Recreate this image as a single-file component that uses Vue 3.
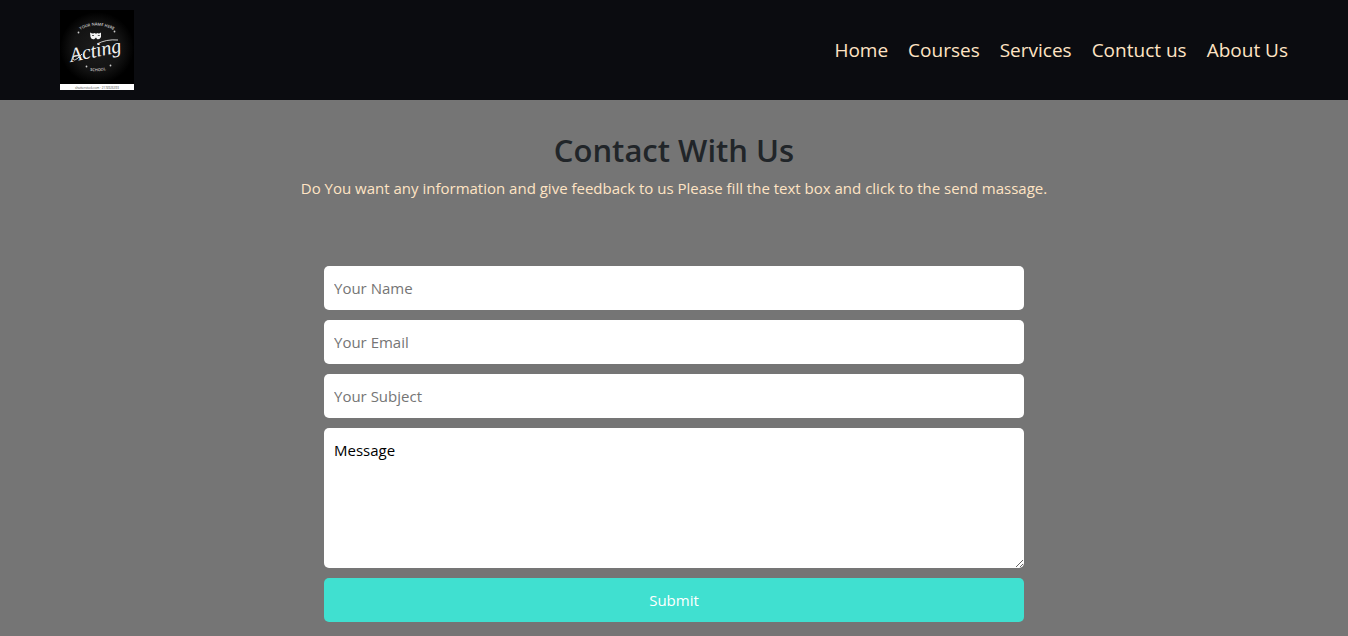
<script setup>
import { ref } from 'vue'

const links = ['Home', 'Courses', 'Services', 'Contuct us', 'About Us']
const fields = [
  { id: 'name', type: 'text', label: 'Your Name' },
  { id: 'email', type: 'email', label: 'Your Email' },
  { id: 'subject', type: 'text', label: 'Your Subject' },
]
const message = ref('Message')
</script>

<template>
  <header class="header">
    <a class="brand" href="#" aria-label="Acting School">
      <svg class="logo" viewBox="0 0 74 80" role="img" aria-hidden="true">
        <defs>
          <radialGradient id="board">
            <stop offset="0" stop-color="#1c1c1c" />
            <stop offset="0.65" stop-color="#131313" />
            <stop offset="1" stop-color="#000" />
          </radialGradient>
          <path id="arc-top" d="M17 22 Q36 9 57 22" />
          <path id="arc-bottom" d="M26 60 Q38 63 50 59" />
        </defs>
        <rect width="74" height="74" fill="#000" />
        <ellipse cx="37" cy="38" rx="37" ry="36" fill="url(#board)" />
        <text class="small"><textPath href="#arc-top" startOffset="50%">YOUR NAME HERE</textPath></text>
        <path fill="#f4f4f4" d="M30 22.500 Q32.500 24 35 23 L36 24 L37 23 Q39 24 41 22.500 L41 27 Q39.500 30 37 29 L36 27.500 L34.500 29 Q31.500 30 30.500 27Z" />
        <path stroke="#333" stroke-width="0.800" d="M32 25.500 h2 M37.800 25.500 h2" />
        <text class="script" transform="rotate(-11 36 44)" x="36" y="47">Acting</text>
        <path fill="none" stroke="#ddd" stroke-width="0.900" d="M37 34 Q46 29 58 30" />
        <path fill="none" stroke="#ddd" stroke-width="1" d="M20 46 Q14 44 13 48 Q13 52 18 48 L22 44" />
        <text class="small"><textPath href="#arc-bottom" startOffset="50%">SCHOOL</textPath></text>
        <g fill="#ccc">
          <circle cx="18.500" cy="22.500" r="0.900" />
          <circle cx="54.500" cy="21.500" r="0.900" />
          <circle cx="26.500" cy="56.500" r="0.900" />
          <circle cx="50.500" cy="55.500" r="0.900" />
        </g>
        <rect y="74" width="74" height="6" fill="#fff" />
        <text class="credit" x="37" y="78.500">shutterstock.com · 2174926393</text>
      </svg>
    </a>
    <nav class="nav" aria-label="Main">
      <a v-for="link in links" :key="link" href="#">{{ link }}</a>
    </nav>
  </header>

  <main class="contact">
    <h1>Contact With Us</h1>
    <p>Do You want any information and give feedback to us Please fill the text box and click to the send massage.</p>
    <form class="form" @submit.prevent>
      <input
        v-for="field in fields"
        :id="field.id"
        :key="field.id"
        :type="field.type"
        :placeholder="field.label"
        :aria-label="field.label"
      />
      <textarea id="message" v-model="message" aria-label="Message"></textarea>
      <button type="submit">Submit</button>
    </form>
  </main>
</template>

<style>
body {
  background: #757575;
  font-family: "Segoe UI", "Open Sans", "Noto Sans", sans-serif;
}
</style>

<style scoped>
.header {
  display: flex;
  align-items: center;
  justify-content: space-between;
  padding: 10px 60px;
  background: #0b0c10;
}
.brand,
.logo {
  display: block;
}
.logo {
  width: 74px;
  height: 80px;
}
.small {
  fill: #ccc;
  font: 600 4px "Open Sans", sans-serif;
  text-anchor: middle;
}
.script {
  fill: #f4f4f4;
  font: italic 400 20px "Liberation Serif", serif;
  text-anchor: middle;
}
.credit {
  fill: #444;
  font: 3px "Open Sans", sans-serif;
  text-anchor: middle;
}
.nav {
  display: flex;
  gap: 20px;
}
.nav a {
  color: bisque;
  font-size: 19px;
  line-height: 30px;
  text-decoration: none;
}
.contact {
  padding: 31px 20px 14px;
  text-align: center;
}
h1 {
  margin: 0 0 7px;
  color: #212529;
  font-size: 31px;
  font-weight: 600;
  line-height: 38px;
}
p {
  margin: 0;
  color: bisque;
  font-size: 15px;
  line-height: 24px;
}
.form {
  display: flex;
  flex-direction: column;
  gap: 10px;
  max-width: 700px;
  margin: 66px auto 0;
}
input,
textarea,
button {
  box-sizing: border-box;
  width: 100%;
  padding: 10px;
  border: 0;
  border-radius: 5px;
  font-family: inherit;
  font-size: 15px;
  line-height: 24px;
}
input,
button {
  height: 44px;
}
input,
textarea {
  background: #fff;
  color: #000;
}
input::placeholder {
  color: #757575;
}
textarea {
  display: block;
  height: 140px;
  resize: vertical;
}
button {
  background: turquoise;
  color: #fff;
}
</style>
